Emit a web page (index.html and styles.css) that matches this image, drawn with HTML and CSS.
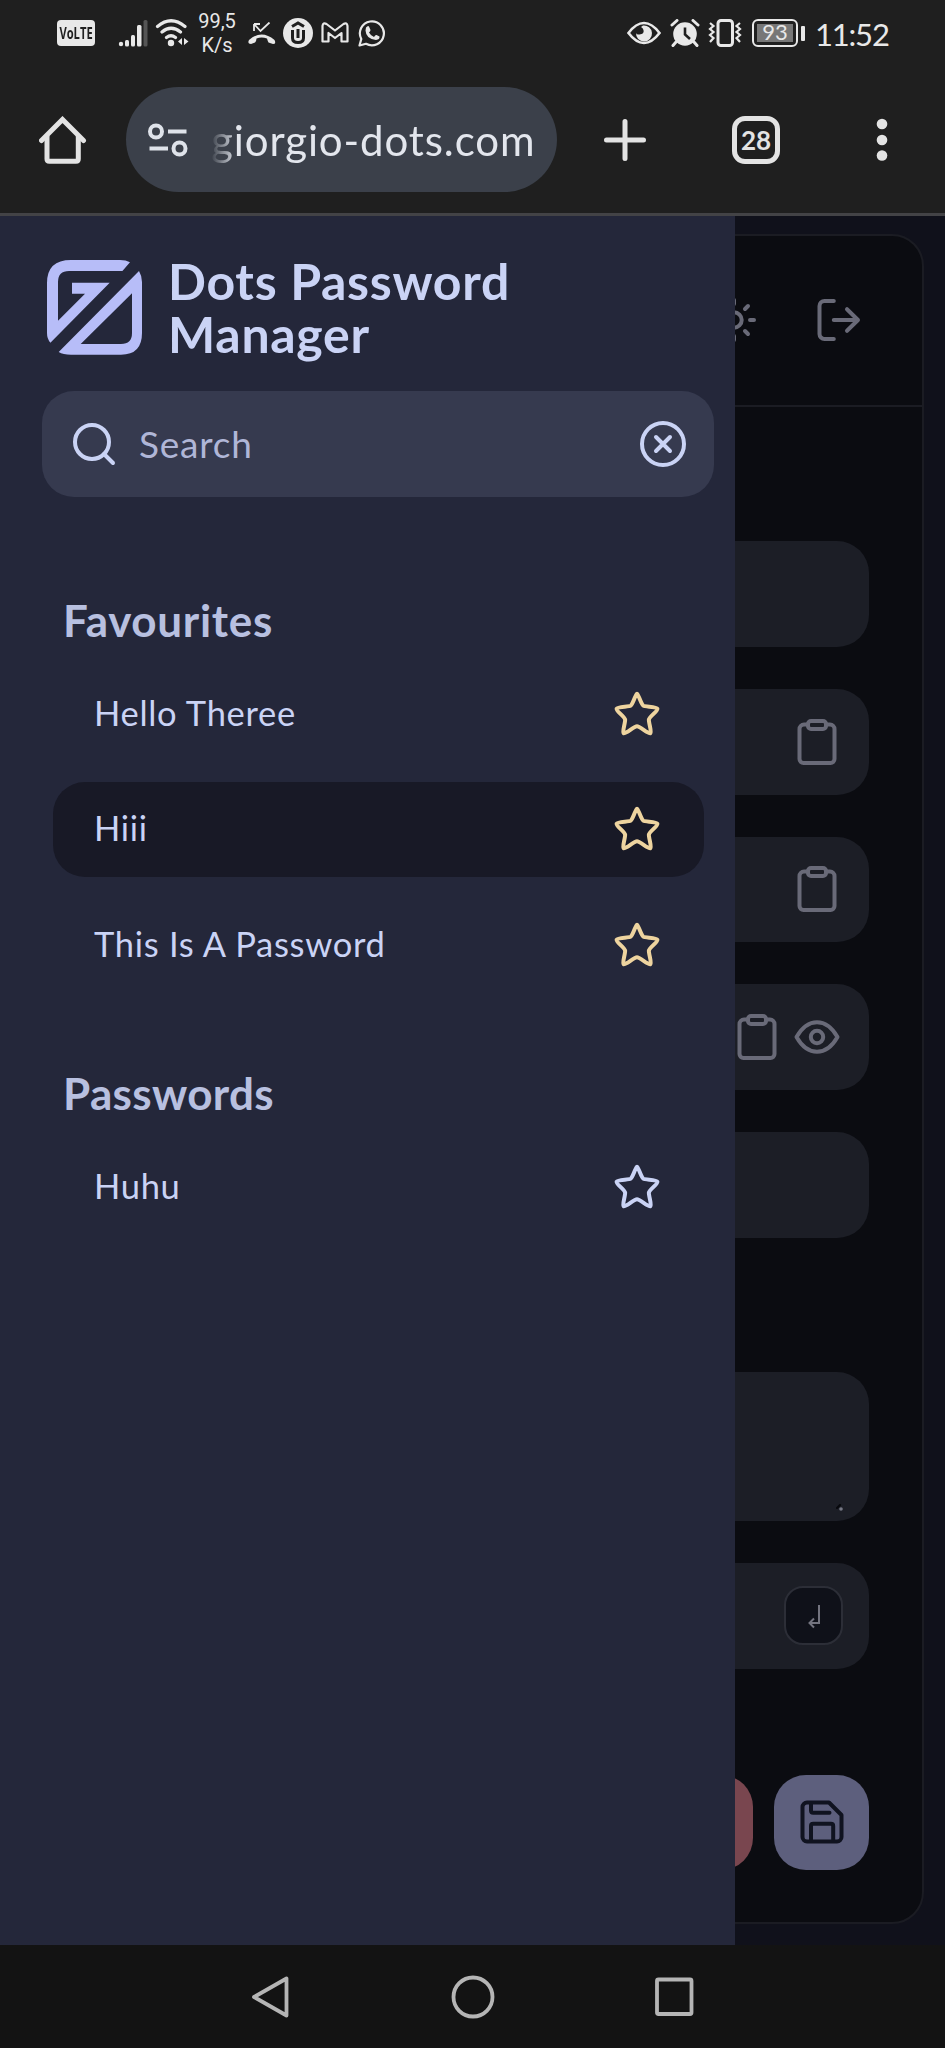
FILE: index.html
```html
<!DOCTYPE html>
<html lang="en">
<head>
<meta charset="utf-8">
<title>Dots Password Manager</title>
<link rel="stylesheet" href="styles.css">
</head>
<body>
<svg class="defs" width="0" height="0" aria-hidden="true">
  <symbol id="star" viewBox="0 0 46 46"><path d="M23 2.800C25 4.500 27 13 29.300 14.600C31.500 16 42 15.300 43.400 17.700C44 20 35.600 25.500 34.900 28.500C34.500 31.500 38 41 36.400 42.300C34 43 26 35.300 23 35.300S12 43 9.600 42.300C8 41 11.500 31.500 11.100 28.500C10.400 25.500 2 20 2.600 17.700C4 15.300 14.500 16 16.700 14.600C19 13 21 4.500 23 2.800Z"/></symbol>
  <symbol id="clipboard" viewBox="0 0 40 48"><path d="M10.500 6.500H7a4.500 4.500 0 0 0-4.500 4.500v30a4 4 0 0 0 4 4h27a4 4 0 0 0 4-4V11a4.500 4.500 0 0 0-4.500-4.500h-3.500"/><rect x="11" y="3" width="18" height="8" rx="3"/></symbol>
</svg>
<div class="screen">
  <header class="status">
    <div class="group">
      <span class="volte"><span>VoLTE</span></span>
      <svg class="signal" width="30" height="28"><g fill="#e8e8e8"><circle cx="3" cy="25" r="2.200"/><rect x="7" y="21" width="4" height="6.500" rx="1.500"/><rect x="13" y="16" width="4" height="11.500" rx="1.500"/><rect x="19" y="6" width="4.500" height="21.500" rx="1.500"/></g><rect x="25.500" y="1" width="4" height="26.500" rx="1.500" fill="#555"/></svg>
      <svg class="wifi" width="36" height="30" fill="none" stroke="#e8e8e8" stroke-width="3.200" stroke-linecap="round"><path d="M2.500 8.500Q16 -3 30 8.500M7 14Q16 6.500 25.500 14M11.500 19.500Q16 16 20.500 19.500"/><circle cx="16" cy="25" r="1.600"/><path d="M27 20l-4 3.500 4 3.500ZM29 20l4.500 3.500-4.500 3.500Z" fill="#e8e8e8" stroke="none"/></svg>
      <span class="speed"><span>99,5</span><span>K/s</span></span>
      <svg class="missed" width="30" height="24"><path d="M7 2v7M7 2h6M7.500 2.500l6 6.500 9-8.500" fill="none" stroke="#e8e8e8" stroke-width="1.800"/><path d="M2 18Q14.500 7 27.500 18Q29.500 22 26 22L21.500 20.500Q20.500 18.500 20 16.500Q14.500 14.500 9.500 16.500Q9.500 18.500 8 20.500L4 22Q0 22 2 18Z" fill="#e8e8e8"/></svg>
      <svg class="uicon" width="30" height="30"><circle cx="15" cy="15" r="15" fill="#e8e8e8"/><path d="M9.500 12v8q0 4.500 5.500 4.500t5.500-4.500v-8M15 11v9M9 8.500l6-3.500 6 3.500" fill="none" stroke="#1f1f1f" stroke-width="3"/></svg>
      <svg class="gmail" width="28" height="22"><path d="M1.500 19.500V4Q2 0 5.500 2L14 8.500 22.500 2Q26 0 26.500 4V19.500H20.500V11L14 16 7.500 11V19.500Z" fill="none" stroke="#e8e8e8" stroke-width="2.200" stroke-linejoin="round"/></svg>
      <svg class="chat" width="28" height="28"><path d="M1.500 26.500L3.300 20A12 12 0 1 1 8 24.800Z" fill="none" stroke="#e8e8e8" stroke-width="2.200" stroke-linejoin="round"/><path d="M8 8.500Q10 6 11 7.500L12.500 11Q12.500 12 11 13.500Q13 17 16 18Q17.500 15.500 18.500 16L21.500 17.500Q22 20.500 18 21Q8 20 7.500 11.500Z" fill="#e8e8e8"/></svg>
    </div>
    <div class="group">
      <svg width="34" height="24"><path d="M1.500 12Q9 2 17 2T32.500 12Q25 22 17 22T1.500 12Z" fill="none" stroke="#e8e8e8" stroke-width="2.600"/><path d="M16 4.500A8 8 0 1 1 9 12Q9.500 14 12.500 13.500Q17.500 13 16.500 9Q16 7 14 6Z" fill="#e8e8e8"/></svg>
      <svg class="alarm" width="30" height="28"><circle cx="15" cy="15" r="11.800" fill="#e8e8e8"/><path d="M2 6l5-4.500M28 6l-5-4.500M6 23l-3 3.500M24 23l3 3.500" stroke="#e8e8e8" stroke-width="3" stroke-linecap="round"/><path d="M15 8.500v7l5 4.500" fill="none" stroke="#1f1f1f" stroke-width="2.600"/></svg>
      <svg class="vibrate" width="34" height="28" fill="none" stroke="#e8e8e8"><rect x="10" y="1.500" width="14.500" height="25" rx="3" stroke-width="3"/><path d="M2 4l3.500 3-3.500 3 3.500 3-3.500 3 3.500 3-3.500 4M32 4l-3.500 3 3.500 3-3.500 3 3.500 3-3.500 3 3.500 4" stroke-width="2.200"/></svg>
      <span class="battery"><span class="level">93</span></span><i class="tip"></i>
      <span class="clock">11:52</span>
    </div>
  </header>
  <div class="toolbar">
    <svg class="home" width="48" height="48" viewBox="0 0 48 48" fill="none" stroke="#e3e3e3" stroke-width="5"><path d="M2.500 24.500L23.500 3.500 44.500 24.500" stroke-linecap="round"/><path d="M8 20V43q0 2.300 2.300 2.300H37q2.300 0 2.300-2.300V20"/></svg>
    <div class="address">
      <svg width="40" height="34" fill="none" stroke="#dfe3ea" stroke-width="4"><circle cx="8" cy="8.500" r="6"/><path d="M20 8.500h18.500M1.500 25.500H20"/><circle cx="31.500" cy="25.500" r="6"/></svg>
      <span class="url">giorgio-dots.com</span>
    </div>
    <svg class="plus" width="42" height="42" stroke="#e3e3e3" stroke-width="5" stroke-linecap="round"><path d="M21 2.500v37M2.500 21h37"/></svg>
    <span class="tabs">28</span>
    <svg class="more" width="12" height="44" fill="#e3e3e3"><circle cx="6" cy="6" r="5.300"/><circle cx="6" cy="22" r="5.300"/><circle cx="6" cy="37.500" r="5.300"/></svg>
  </div>
  <main class="page">
    <section class="panel">
      <div class="panel-head">
        <svg width="46" height="46" viewBox="0 0 46 46"><circle cx="23" cy="23" r="7.700"/><path d="M23 3v4M23 39v4M3 23h4M39 23h4M9 9l3 3M34 34l3 3M9 37l3-3M34 12l3-3"/></svg>
        <svg width="46" height="46" viewBox="0 0 46 46"><path d="M18.800 4H9.500a5 5 0 0 0-5 5v28a5 5 0 0 0 5 5h9.300M18.800 23H43M32 12.200L43 23 32 33.800"/></svg>
      </div>
      <div class="form">
        <div class="field"></div>
        <div class="field"><svg class="clip"><use href="#clipboard"/></svg></div>
        <div class="field"><svg class="clip"><use href="#clipboard"/></svg></div>
        <div class="field"><svg class="clip"><use href="#clipboard"/></svg><svg class="eye" width="46" height="34"><path d="M2.500 17Q11 2.200 23 2.200T43.500 17Q35 31.800 23 31.800T2.500 17Z"/><circle cx="23" cy="17" r="6.200"/></svg></div>
        <div class="field"></div>
        <div class="field notes"><svg width="8" height="8"><path d="M1 4l3-3" stroke="#07080c" stroke-width="2"/><circle cx="5" cy="5" r="1.800" fill="#777985" stroke="none"/></svg></div>
        <div class="field entry"><span class="key"><svg width="16" height="26"><path d="M13 2v18H4M8 15.500L3.500 20 8 24.500"/></svg></span></div>
        <div class="actions">
          <span class="btn delete"></span>
          <span class="btn save"><svg width="44" height="44"><path d="M7 2.500H29L41.500 15V37a4.500 4.500 0 0 1-4.500 4.500H7A4.500 4.500 0 0 1 2.500 37V7A4.500 4.500 0 0 1 7 2.500ZM11 3V10.500q0 2.200 2.200 2.200H29.500M11 41V26q0-2.200 2.200-2.200H31q2.200 0 2.200 2.200V41"/></svg></span>
        </div>
      </div>
    </section>
    <aside class="drawer">
      <div class="brand">
        <svg width="95" height="95" fill="#b7bdf8"><path d="M83 2.300Q79 0 73 0H24Q0 0 0 23V73Q0 79 3.400 82.700L62.700 22.700H25V33.700H38L11 60.700V22Q11 11 22 11H75.400Z"/><path fill-rule="evenodd" d="M92 11Q95 16 95 22V73Q95 94.700 74 94.700H24Q16 94.700 11.700 92ZM85 33.300V73Q85 84 74 84H33.700Z"/></svg>
        <h1>Dots Password Manager</h1>
      </div>
      <div class="search">
        <svg width="44" height="44"><circle cx="20" cy="20" r="17"/><path d="M32 32l9 9"/></svg>
        <span>Search</span>
        <svg class="clear" width="48" height="48"><circle cx="24" cy="24" r="21"/><path d="M17 17l14 14M31 17L17 31"/></svg>
      </div>
      <h2 class="fav">Favourites</h2>
      <ul>
        <li><span>Hello Theree</span><svg><use href="#star"/></svg></li>
        <li class="active"><span>Hiii</span><svg><use href="#star"/></svg></li>
        <li><span>This Is A Password</span><svg><use href="#star"/></svg></li>
      </ul>
      <h2 class="pass">Passwords</h2>
      <ul class="plain">
        <li><span>Huhu</span><svg><use href="#star"/></svg></li>
      </ul>
    </aside>
  </main>
  <nav class="navbar">
    <svg width="40" height="44"><path d="M3 22L35.500 3.500V40.500Z"/></svg>
    <svg width="44" height="44"><circle cx="22" cy="22" r="19.500"/></svg>
    <svg width="40" height="44"><rect x="2" y="4.500" width="34.500" height="34.500" rx="1.500"/></svg>
  </nav>
</div>
</body>
</html>
```

FILE: styles.css
```css
* { box-sizing: border-box; }
body { margin: 0; background: #131313; font-family: Lato, "Open Sans", sans-serif; }
svg { display: block; flex: none; }
.defs { position: absolute; }
.screen { width: 945px; height: 2048px; display: flex; flex-direction: column; overflow: hidden; }

/* System status bar */
.status { height: 66px; flex: none; background: #1f1f1f; color: #e8e8e8; display: flex; justify-content: space-between; padding: 0 58px 0 57px; }
.group { display: flex; align-items: center; }
.volte { width: 38px; height: 26px; border-radius: 4px; background: #e8e8e8; color: #1f1f1f; font: bold 15.500px/26px "Open Sans", sans-serif; display: flex; justify-content: center; }
.volte span { transform: scaleX(.72); }
.signal { margin-left: 23px; }
.wifi { margin-left: 7px; }
.speed { width: 44px; margin-left: 4px; display: flex; flex-direction: column; align-items: center; font: 20px/24px Roboto, sans-serif; }
.missed { margin: 2px 0 0 8px; }
.uicon { margin-left: 6px; }
.gmail { margin-left: 8px; }
.chat { margin-left: 9px; }
.alarm { margin-left: 9px; }
.vibrate { margin-left: 8px; }
.battery { width: 46px; height: 28px; margin-left: 10px; padding: 3px; border: 2.5px solid #e8e8e8; border-radius: 6px; display: flex; }
.level { flex: 1; background: #777; font: 22px/16px Lato, sans-serif; text-align: center; }
.tip { width: 4px; height: 15px; margin-left: 3px; border-radius: 1px; background: #e8e8e8; }
.clock { font-size: 31px; margin-left: 10px; letter-spacing: -1.200px; width: 72px; margin-top: 2px; white-space: nowrap; }

/* Browser toolbar */
.toolbar { height: 150px; flex: none; background: #1f1f1f; border-bottom: 3px solid #434346; display: flex; align-items: center; padding: 0 57px 0 39px; }
.address { width: 431px; height: 105px; margin-left: 39px; padding-left: 22px; border-radius: 53px; background: #3b404a; display: flex; align-items: center; }
.url { margin-left: 23px; font-size: 42px; letter-spacing: .9px; color: #e3e6ed; white-space: nowrap; mask-image: linear-gradient(90deg, transparent, #000 26px); }
.plus { margin-left: 47px; }
.tabs { width: 48px; height: 48px; margin-left: 86px; border: 5px solid #e3e3e3; border-radius: 13px; color: #e3e3e3; font-size: 26px; font-weight: 700; line-height: 38px; text-align: center; }
.more { margin-left: 96px; }

/* Dimmed page under the drawer */
.page { height: 1729px; flex: none; position: relative; background: #10111b; padding: 18px 21px 21px; }
.panel { height: 1690px; border: 2px solid #1b1c23; border-radius: 32px; background: #0b0c11; color: #696a78; }
.panel svg { fill: none; stroke: #696a78; stroke-width: 4; stroke-linecap: round; stroke-linejoin: round; }
.panel-head { height: 171px; border-bottom: 2px solid #1b1c23; display: flex; align-items: center; justify-content: flex-end; gap: 58px; padding: 0 61px 2px 0; }
.form { padding: 134px 53px 0; display: flex; flex-direction: column; gap: 42px; }
.field { height: 105.800px; border-radius: 32px; background: #1c1e26; display: flex; align-items: center; justify-content: flex-end; gap: 16px; padding-right: 29px; }
.clip { width: 40px; height: 48px; margin-right: 3px; }
.field .clip + .eye { margin-left: -2px; }
.notes { height: 149px; margin-top: 92px; align-items: flex-end; padding: 0 25px 9px 0; }
.entry { padding-right: 26px; }
.key { width: 59px; height: 59px; border: 2.5px solid #2c2e37; border-radius: 19px; background: #0f1119; display: flex; align-items: center; justify-content: center; }
.panel .key svg { stroke: #73747f; stroke-width: 2; stroke-linecap: butt; stroke-linejoin: miter; }
.actions { display: flex; justify-content: flex-end; gap: 21px; margin-top: 64px; }
.btn { width: 95px; height: 95px; border-radius: 32px; display: flex; align-items: center; justify-content: center; }
.delete { background: #79464f; }
.save { background: #5d5f7d; }
.panel .save svg { stroke: #101320; }

/* Drawer */
.drawer { position: absolute; left: 0; top: 0; width: 735px; height: 1729px; background: #24273a; color: #cad3f5; }
.brand { display: flex; align-items: center; gap: 26px; padding: 39px 0 0 47px; height: 144px; }
h1 { margin: 0; width: 400px; font-size: 50px; line-height: 52.500px; letter-spacing: .7px; }
.search { width: 672px; height: 106px; margin: 31px 0 0 42px; padding: 0 27px 0 30px; border-radius: 32px; background: #363a4f; display: flex; align-items: center; font-size: 37px; letter-spacing: .8px; color: #b0b6d7; }
.search svg { fill: none; stroke: #cad3f5; stroke-width: 4; stroke-linecap: round; }
.search span { margin: -2px 0 0 23px; }
.search .clear { margin-left: auto; }
h2 { margin: 0 0 0 63px; font-size: 44px; line-height: 53px; letter-spacing: .7px; color: #b8c0e0; white-space: nowrap; }
.fav { margin-top: 97px; }
.pass { margin-top: 75px; letter-spacing: .35px; }
ul { list-style: none; margin: 19px 0 0 53px; padding: 0; width: 651px; display: flex; flex-direction: column; gap: 20.500px; }
li { height: 95px; border-radius: 32px; padding: 0 44px 0 41px; display: flex; align-items: center; justify-content: space-between; font-size: 34.500px; letter-spacing: .7px; white-space: nowrap; }
li span { margin-top: -3px; }
li svg { width: 46px; height: 46px; fill: none; stroke: #eed49f; stroke-width: 4; stroke-linejoin: round; }
.active { background: #181926; }
.plain svg { stroke: #cad3f5; }

/* System navigation */
.navbar { flex: 1; background: #131313; display: flex; align-items: center; justify-content: center; gap: 160px; }
.navbar svg { fill: none; stroke: #b5b5b5; stroke-width: 3.800; stroke-linejoin: round; }
```
